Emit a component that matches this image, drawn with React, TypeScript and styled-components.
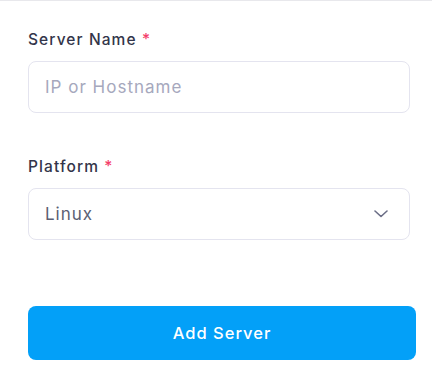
import React from 'react';
import styled, { createGlobalStyle } from 'styled-components';

const GlobalStyle = createGlobalStyle`
  html, body {
    margin: 0;
    padding: 0;
    background: #ffffff;
  }
  body {
    font-family: 'Inter', 'Noto Sans', sans-serif;
  }
`;

export default function App() {
  return (
    <Panel>
      <GlobalStyle />
      <Form onSubmit={(e) => e.preventDefault()}>
        <Field>
          <Label>
            Server Name <Required>*</Required>
          </Label>
          <Input placeholder='IP or Hostname' />
        </Field>
        <Field>
          <Label>
            Platform <Required>*</Required>
          </Label>
          <SelectBox>
            <SelectValue>Linux</SelectValue>
            <Chevron width='14' height='8' viewBox='0 0 14 8'>
              <path d='M1 1l6 5.5L13 1' fill='none' stroke='#6b6e86' strokeWidth='1.6' strokeLinecap='round' strokeLinejoin='round' />
            </Chevron>
          </SelectBox>
        </Field>
        <SubmitButton type='submit'>Add Server</SubmitButton>
      </Form>
    </Panel>
  );
}

const Panel = styled.div`
  width: 432px;
  height: 377px;
  box-sizing: border-box;
  border-top: 1px solid #e8e8ec;
  background: #ffffff;
  overflow: hidden;
`;

const Form = styled.form`
  display: flex;
  flex-direction: column;
  padding: 28px 16px 0 28px;
`;

const Field = styled.div`
  display: flex;
  flex-direction: column;
  gap: 10px;
  width: 382px;
  margin-bottom: 43px;
`;

const Label = styled.label`
  font-size: 15.5px;
  line-height: 22px;
  font-weight: 500;
  color: #33354a;
  letter-spacing: 1.1px;
`;

const Required = styled.span`
  color: #f43f6b;
`;

const Input = styled.input`
  box-sizing: border-box;
  height: 52px;
  width: 100%;
  padding: 0 16px;
  border: 1px solid #e4e4ef;
  border-radius: 8px;
  font-family: 'Inter', sans-serif;
  font-size: 17px;
  color: #33354a;
  outline: none;
  letter-spacing: 1px;
  &::placeholder {
    color: #a6a8bd;
  }
`;

const SelectBox = styled.div`
  box-sizing: border-box;
  height: 52px;
  display: flex;
  align-items: center;
  justify-content: space-between;
  padding: 0 21px 0 16px;
  border: 1px solid #e4e4ef;
  border-radius: 8px;
`;

const SelectValue = styled.span`
  font-size: 17px;
  color: #5c5f74;
  letter-spacing: 1px;
`;

const Chevron = styled.svg`
  display: block;
`;

const SubmitButton = styled.button`
  margin-top: 23px;
  width: 388px;
  height: 54px;
  border: 0;
  border-radius: 8px;
  background: #03a0f8;
  color: #ffffff;
  font-family: 'Inter', sans-serif;
  font-size: 16.5px;
  font-weight: 500;
  letter-spacing: 1px;
  cursor: pointer;
`;
